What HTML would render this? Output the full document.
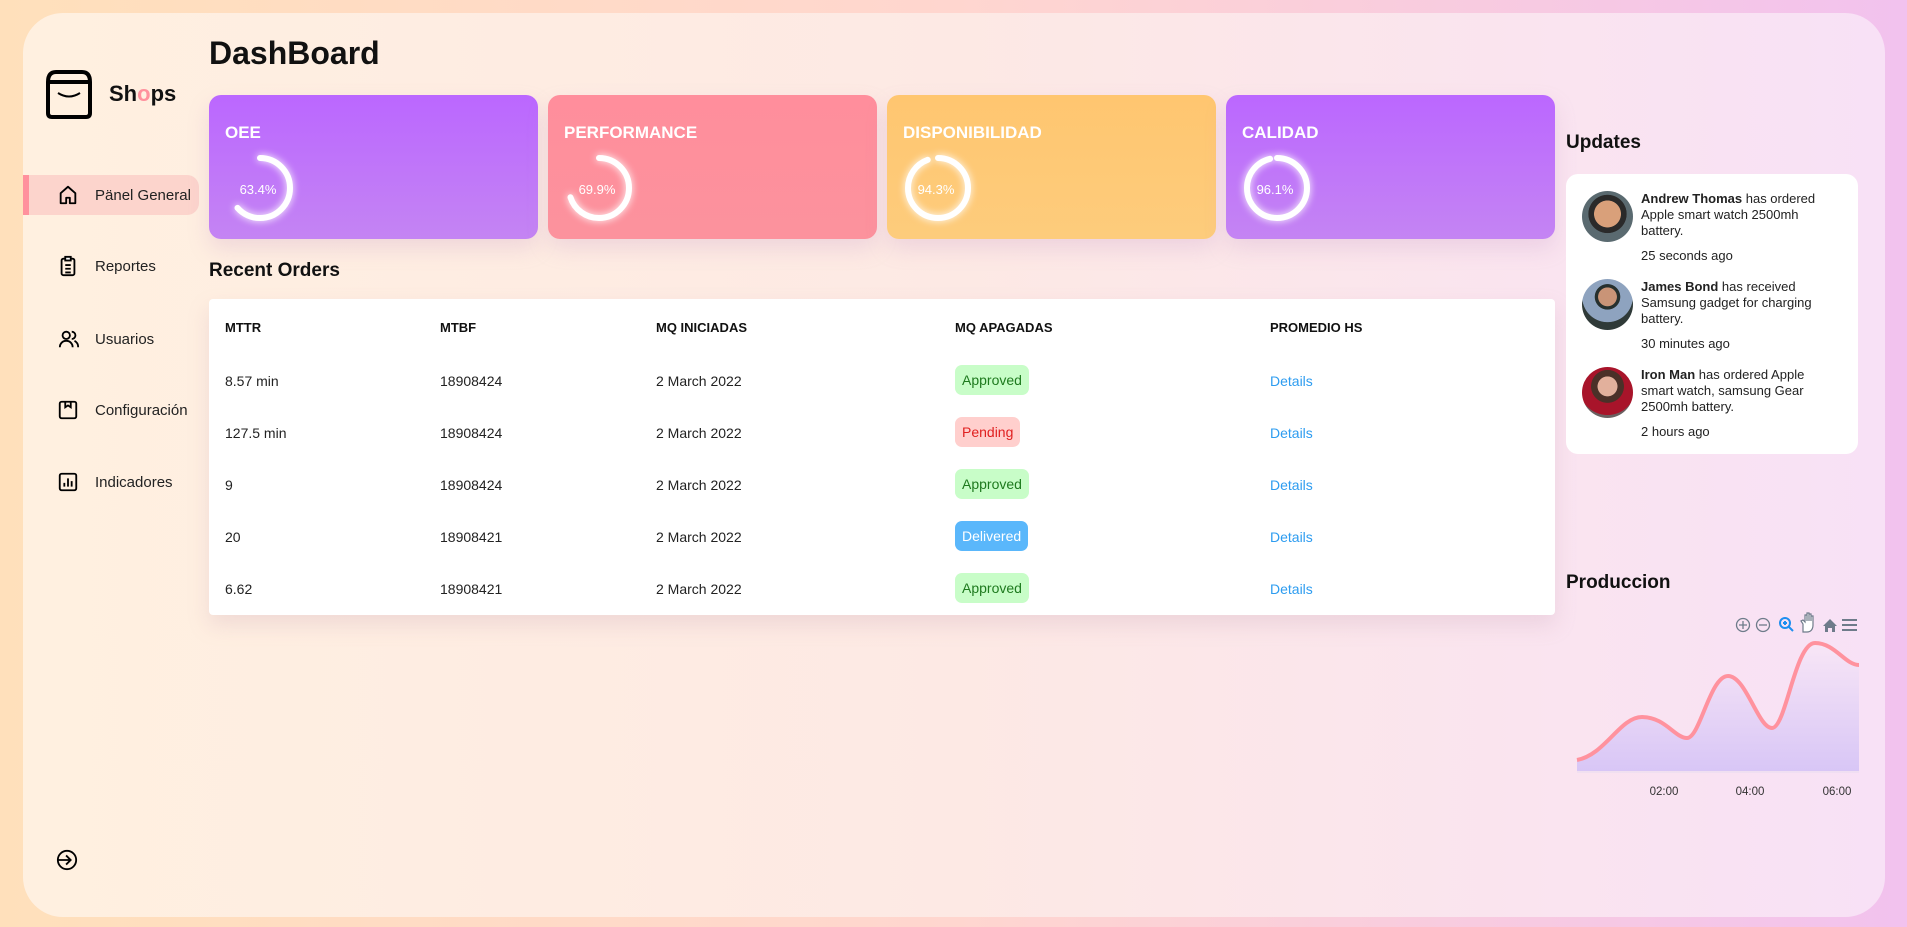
<!DOCTYPE html>
<html><head><meta charset="utf-8"><style>
*{margin:0;padding:0;box-sizing:border-box}
body{width:1907px;height:927px;overflow:hidden;font-family:"Liberation Sans",sans-serif;background:linear-gradient(90deg,#ffe0bb 0%,#ffd6cf 50%,#f2c2ee 100%);position:relative;color:#111}
.panel{position:absolute;left:23px;top:13px;width:1862px;height:904px;border-radius:40px;background:linear-gradient(90deg,#fff0e0 0%,#fde9e4 50%,#f8e1f6 100%)}
.abs{position:absolute}
.nav{position:absolute;left:23px;width:176px;height:40px;display:flex;align-items:center;font-size:15px;color:#222}
.nav svg{position:absolute;left:34px}
.nav span{position:absolute;left:72px}
.card{position:absolute;top:95px;width:329px;height:144px;border-radius:12px;box-shadow:0 10px 20px rgba(200,150,200,.25)}
.card h3{position:absolute;left:16px;top:28px;color:#fff;font-size:17px;font-weight:bold}
.card svg{position:absolute;left:16px;top:58px}
.card .p{position:absolute;left:19px;top:87px;width:60px;text-align:center;color:#fff;font-size:13px}
.tb{position:absolute;left:209px;top:299px;width:1346px;height:316px;background:#fff;border-radius:4px;box-shadow:0 10px 20px rgba(200,160,180,.25)}
.tb div{position:absolute;font-size:14px;color:#222}
.h{font-weight:bold;font-size:13px!important;color:#111!important}
.bd{padding:7px 7px;border-radius:7px;font-size:14px}
.ap{background:#c8fdc8;color:#1e7a1e!important}
.pe{background:#ffcfcd;color:#e02020!important}
.de{background:#5ab7fb;color:#fff!important}
.dt{color:#2d9cf0!important}
.up{position:absolute;left:1566px;top:174px;width:292px;height:280px;background:#fff;border-radius:12px}
.it{position:absolute;left:75px;font-size:13px;line-height:16px;color:#222;width:194px}
.av{position:absolute;left:16px;width:51px;height:51px;border-radius:50%}
.tm{position:absolute;left:75px;font-size:13px;color:#222}
</style></head><body>
<div class="panel"></div>
<svg class="abs" style="left:44px;top:69px" width="50" height="50" viewBox="0 0 50 50"><path d="M4 13 Q4 3 12 3 H38 Q46 3 46 13 V44 Q46 48 42 48 H8 Q4 48 4 44 Z M4 13 H46" fill="none" stroke="#000" stroke-width="4" stroke-linejoin="round"/><path d="M14 24 Q25 31 36 24" fill="none" stroke="#000" stroke-width="2"/></svg>
<div class="abs" style="left:109px;top:81px;font-size:22px;font-weight:bold">Sh<span style="color:#ff919d">o</span>ps</div>
<div class="abs" style="left:209px;top:35px;font-size:32px;font-weight:bold">DashBoard</div>
<div class="nav" style="top:175px;background:#fcd4cc;border-radius:0 12px 12px 0;border-left:6px solid #ff919d"><svg width="22" height="22" viewBox="0 0 24 24" style="left:28px"><path d="M4 21V10L12 3L20 10V21H14V15H10V21Z" fill="none" stroke="#000" stroke-width="2" stroke-linejoin="round"/></svg><span style="left:66px">Pänel General</span></div>
<div class="nav" style="top:246px"><svg width="22" height="22" viewBox="0 0 24 24"><rect x="5" y="4" width="14" height="18" rx="2" fill="none" stroke="#000" stroke-width="2"/><rect x="9" y="2" width="6" height="4" fill="#fff" stroke="#000" stroke-width="2"/><path d="M9 11h6M9 15h6M9 19h6" stroke="#000" stroke-width="2"/></svg><span>Reportes</span></div>
<div class="nav" style="top:319px"><svg width="24" height="22" viewBox="0 0 24 24"><circle cx="9" cy="8" r="4" fill="none" stroke="#000" stroke-width="2"/><path d="M2 21c0-4 3-7 7-7s7 3 7 7M15 4a4 4 0 0 1 0 8M18 14c2 1 4 3 4 7" fill="none" stroke="#000" stroke-width="2"/></svg><span>Usuarios</span></div>
<div class="nav" style="top:390px"><svg width="22" height="22" viewBox="0 0 24 24"><rect x="3" y="3" width="18" height="18" rx="2" fill="none" stroke="#000" stroke-width="2"/><path d="M9 3v6l3-2 3 2V3" fill="none" stroke="#000" stroke-width="2"/></svg><span>Configuración</span></div>
<div class="nav" style="top:462px"><svg width="22" height="22" viewBox="0 0 24 24"><rect x="3" y="3" width="18" height="18" rx="2" fill="none" stroke="#000" stroke-width="2"/><path d="M8 17v-4M12 17V8M16 17v-6" stroke="#000" stroke-width="2"/></svg><span>Indicadores</span></div>
<svg class="abs" style="left:56px;top:849px" width="22" height="22" viewBox="0 0 24 24"><circle cx="12" cy="12" r="10" fill="none" stroke="#000" stroke-width="2"/><path d="M2 12h13M11 7l5 5-5 5" fill="none" stroke="#000" stroke-width="2"/></svg>

<div class="card" style="left:209px;background:linear-gradient(180deg,#bb67ff,#c484f3)"><h3>OEE</h3><svg width="70" height="70" viewBox="0 0 70 70" style="filter:drop-shadow(0 0 4px #fff)"><circle cx="35" cy="35" r="30" fill="none" stroke="#fff" stroke-width="6" stroke-dasharray="119.5 200" transform="rotate(-90 35 35)" stroke-linecap="round"/></svg><div class="p">63.4%</div></div>
<div class="card" style="left:548px;background:linear-gradient(180deg,#ff8e9c,#fc929d)"><h3>PERFORMANCE</h3><svg width="70" height="70" viewBox="0 0 70 70" style="filter:drop-shadow(0 0 4px #fff)"><circle cx="35" cy="35" r="30" fill="none" stroke="#fff" stroke-width="6" stroke-dasharray="131.7 200" transform="rotate(-90 35 35)" stroke-linecap="round"/></svg><div class="p">69.9%</div></div>
<div class="card" style="left:887px;background:linear-gradient(180deg,#ffc670,#fdcc7c)"><h3>DISPONIBILIDAD</h3><svg width="70" height="70" viewBox="0 0 70 70" style="filter:drop-shadow(0 0 4px #fff)"><circle cx="35" cy="35" r="30" fill="none" stroke="#fff" stroke-width="6" stroke-dasharray="177.7 200" transform="rotate(-90 35 35)" stroke-linecap="round"/></svg><div class="p">94.3%</div></div>
<div class="card" style="left:1226px;background:linear-gradient(180deg,#bb67ff,#c484f3)"><h3>CALIDAD</h3><svg width="70" height="70" viewBox="0 0 70 70" style="filter:drop-shadow(0 0 4px #fff)"><circle cx="35" cy="35" r="30" fill="none" stroke="#fff" stroke-width="6" stroke-dasharray="181.2 200" transform="rotate(-90 35 35)" stroke-linecap="round"/></svg><div class="p">96.1%</div></div>

<div class="abs" style="left:209px;top:260px;font-size:19px;font-weight:bold">Recent Orders</div>
<div class="tb">
<div class="h" style="left:16px;top:21px">MTTR</div><div class="h" style="left:231px;top:21px">MTBF</div><div class="h" style="left:447px;top:21px">MQ INICIADAS</div><div class="h" style="left:746px;top:21px">MQ APAGADAS</div><div class="h" style="left:1061px;top:21px">PROMEDIO HS</div>
<div style="left:16px;top:74px">8.57 min</div><div style="left:231px;top:74px">18908424</div><div style="left:447px;top:74px">2 March 2022</div><div class="bd ap" style="left:746px;top:66px">Approved</div><div class="dt" style="left:1061px;top:74px">Details</div>
<div style="left:16px;top:126px">127.5 min</div><div style="left:231px;top:126px">18908424</div><div style="left:447px;top:126px">2 March 2022</div><div class="bd pe" style="left:746px;top:118px">Pending</div><div class="dt" style="left:1061px;top:126px">Details</div>
<div style="left:16px;top:178px">9</div><div style="left:231px;top:178px">18908424</div><div style="left:447px;top:178px">2 March 2022</div><div class="bd ap" style="left:746px;top:170px">Approved</div><div class="dt" style="left:1061px;top:178px">Details</div>
<div style="left:16px;top:230px">20</div><div style="left:231px;top:230px">18908421</div><div style="left:447px;top:230px">2 March 2022</div><div class="bd de" style="left:746px;top:222px">Delivered</div><div class="dt" style="left:1061px;top:230px">Details</div>
<div style="left:16px;top:282px">6.62</div><div style="left:231px;top:282px">18908421</div><div style="left:447px;top:282px">2 March 2022</div><div class="bd ap" style="left:746px;top:274px">Approved</div><div class="dt" style="left:1061px;top:282px">Details</div>
</div>

<div class="abs" style="left:1566px;top:132px;font-size:19px;font-weight:bold">Updates</div>
<div class="up">
<div class="av" style="top:17px;background:radial-gradient(circle at 50% 45%,#d9a07a 0 35%,#2a2a2a 36% 50%,#5a6a70 51%)"></div>
<div class="it" style="top:17px"><b>Andrew Thomas</b> has ordered Apple smart watch 2500mh battery.</div><div class="tm" style="top:74px">25 seconds ago</div>
<div class="av" style="top:105px;background:radial-gradient(circle at 50% 35%,#c99477 0 22%,#26302e 23% 30%,#8ea3bf 31% 60%,#2f3a38 61%)"></div>
<div class="it" style="top:105px"><b>James Bond</b> has received Samsung gadget for charging battery.</div><div class="tm" style="top:162px">30 minutes ago</div>
<div class="av" style="top:193px;background:radial-gradient(circle at 50% 38%,#e2b09c 0 24%,#4a3028 25% 40%,#a8142a 41% 70%,#6a6060 71%)"></div>
<div class="it" style="top:193px"><b>Iron Man</b> has ordered Apple smart watch, samsung Gear 2500mh battery.</div><div class="tm" style="top:250px">2 hours ago</div>
</div>

<div class="abs" style="left:1566px;top:572px;font-size:19px;font-weight:bold">Produccion</div>
<svg class="abs" style="left:1560px;top:610px" width="310" height="200" viewBox="1560 610 310 200">
<defs><linearGradient id="g" x1="0" y1="0" x2="0" y2="1"><stop offset="0" stop-color="#f8e6f6"/><stop offset="1" stop-color="#d8c6f6"/></linearGradient></defs>
<g fill="none" stroke="#6e7b8a" stroke-width="1.3"><circle cx="1743" cy="625" r="6.5"/><path d="M1739 625h8M1743 621v8"/><circle cx="1763" cy="625" r="6.5"/><path d="M1759 625h8"/></g>
<g fill="none" stroke="#1e8ff0" stroke-width="2"><circle cx="1785" cy="623" r="5"/><path d="M1789 627l4 4M1783 623h4M1785 621v4"/></g>
<path d="M1803 632v-8l-2-3 2-1 2 2v-7h2v6-8h2v8-7h2v7-5h2v9c0 4-2 7-6 7z" fill="#fff" stroke="#6e7b8a" stroke-width="1.2"/>
<path d="M1823 626l7-7 7 7h-2v6h-3v-4h-4v4h-3v-6z" fill="#6e7b8a"/>
<path d="M1842 620h15M1842 625h15M1842 630h15" stroke="#6e7b8a" stroke-width="2"/>
<path d="M1577 760 C1605 755 1620 717 1642 717 C1665 717 1675 738 1687 738 C1700 738 1710 676 1728 676 C1746 676 1758 728 1772 728 C1786 728 1795 643 1815 643 C1835 643 1845 665 1859 665 L1859 771 L1577 771Z" fill="url(#g)"/>
<path d="M1577 760 C1605 755 1620 717 1642 717 C1665 717 1675 738 1687 738 C1700 738 1710 676 1728 676 C1746 676 1758 728 1772 728 C1786 728 1795 643 1815 643 C1835 643 1845 665 1859 665" fill="none" stroke="#ff929e" stroke-width="4"/>
<path d="M1577 772H1859" stroke="#e8dcef" stroke-width="1"/>
<g font-family="Liberation Sans" font-size="11.5" fill="#333" text-anchor="middle"><text x="1664" y="795">02:00</text><text x="1750" y="795">04:00</text><text x="1837" y="795">06:00</text></g>
</svg>
</body></html>
